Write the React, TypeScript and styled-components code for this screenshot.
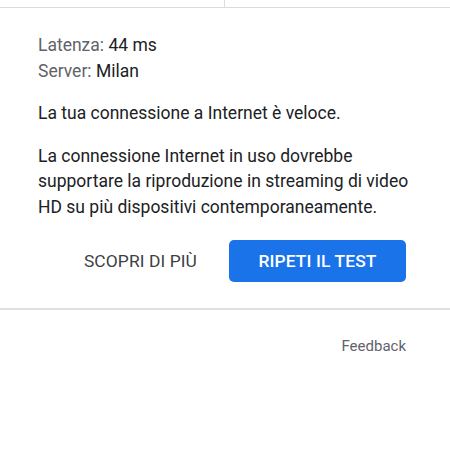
import React from 'react'
import styled, { createGlobalStyle } from 'styled-components'

const GlobalStyle = createGlobalStyle`
  body {
    margin: 0;
    background: #ffffff;
    font-family: Roboto, "Liberation Sans", sans-serif;
  }
`

const Page = styled.div`
  width: 450px;
  height: 450px;
  background: #ffffff;
  overflow: hidden;
`

const TopStrip = styled.div`
  display: grid;
  grid-template-columns: 225px 1fr;
  height: 7px;
  border-bottom: 1px solid #dadce0;
`

const Half = styled.div<{ $divider?: boolean }>`
  border-right: ${(p) => (p.$divider ? '1px solid #dadce0' : 'none')};
`

const Card = styled.div`
  padding: 25px 36px 26px 38px;
  border-bottom: 2px solid #e0e0e0;
  color: #202124;
  font-size: 17.5px;
  line-height: 25.5px;
`

const Meta = styled.div`
  display: flex;
  flex-direction: column;
`

const Label = styled.span`
  color: #5f6368;
`

const Text = styled.p`
  margin: 17px 0 0;
`

const Actions = styled.div`
  display: flex;
  justify-content: flex-end;
  align-items: center;
  gap: 32px;
  margin: 20px 8px 0 0;
`

const Button = styled.button<{ $primary?: boolean }>`
  font-family: Roboto, "Liberation Sans", sans-serif;
  font-size: 17.4px;
  letter-spacing: 0.1px;
  height: 42px;
  border: none;
  border-radius: 5px;
  padding: 0;
  width: ${(p) => (p.$primary ? '177px' : 'auto')};
  background: ${(p) => (p.$primary ? '#1a73e8' : 'transparent')};
  color: ${(p) => (p.$primary ? '#ffffff' : '#3c4043')};
  font-weight: ${(p) => (p.$primary ? 500 : 400)};
`

const Footer = styled.div`
  display: flex;
  justify-content: flex-end;
  padding: 27px 44px 0 0;
  color: #5f6368;
  font-size: 15px;
`

export default function App() {
  return (
    <Page>
      <GlobalStyle />
      <TopStrip>
        <Half $divider />
        <Half />
      </TopStrip>
      <Card>
        <Meta>
          <div>
            <Label>Latenza:</Label> 44 ms
          </div>
          <div>
            <Label>Server:</Label> Milan
          </div>
        </Meta>
        <Text>La tua connessione a Internet è veloce.</Text>
        <Text>
          La connessione Internet in uso dovrebbe supportare la riproduzione in streaming di video HD su più
          dispositivi contemporaneamente.
        </Text>
        <Actions>
          <Button>SCOPRI DI PIÙ</Button>
          <Button $primary>RIPETI IL TEST</Button>
        </Actions>
      </Card>
      <Footer>Feedback</Footer>
    </Page>
  )
}
